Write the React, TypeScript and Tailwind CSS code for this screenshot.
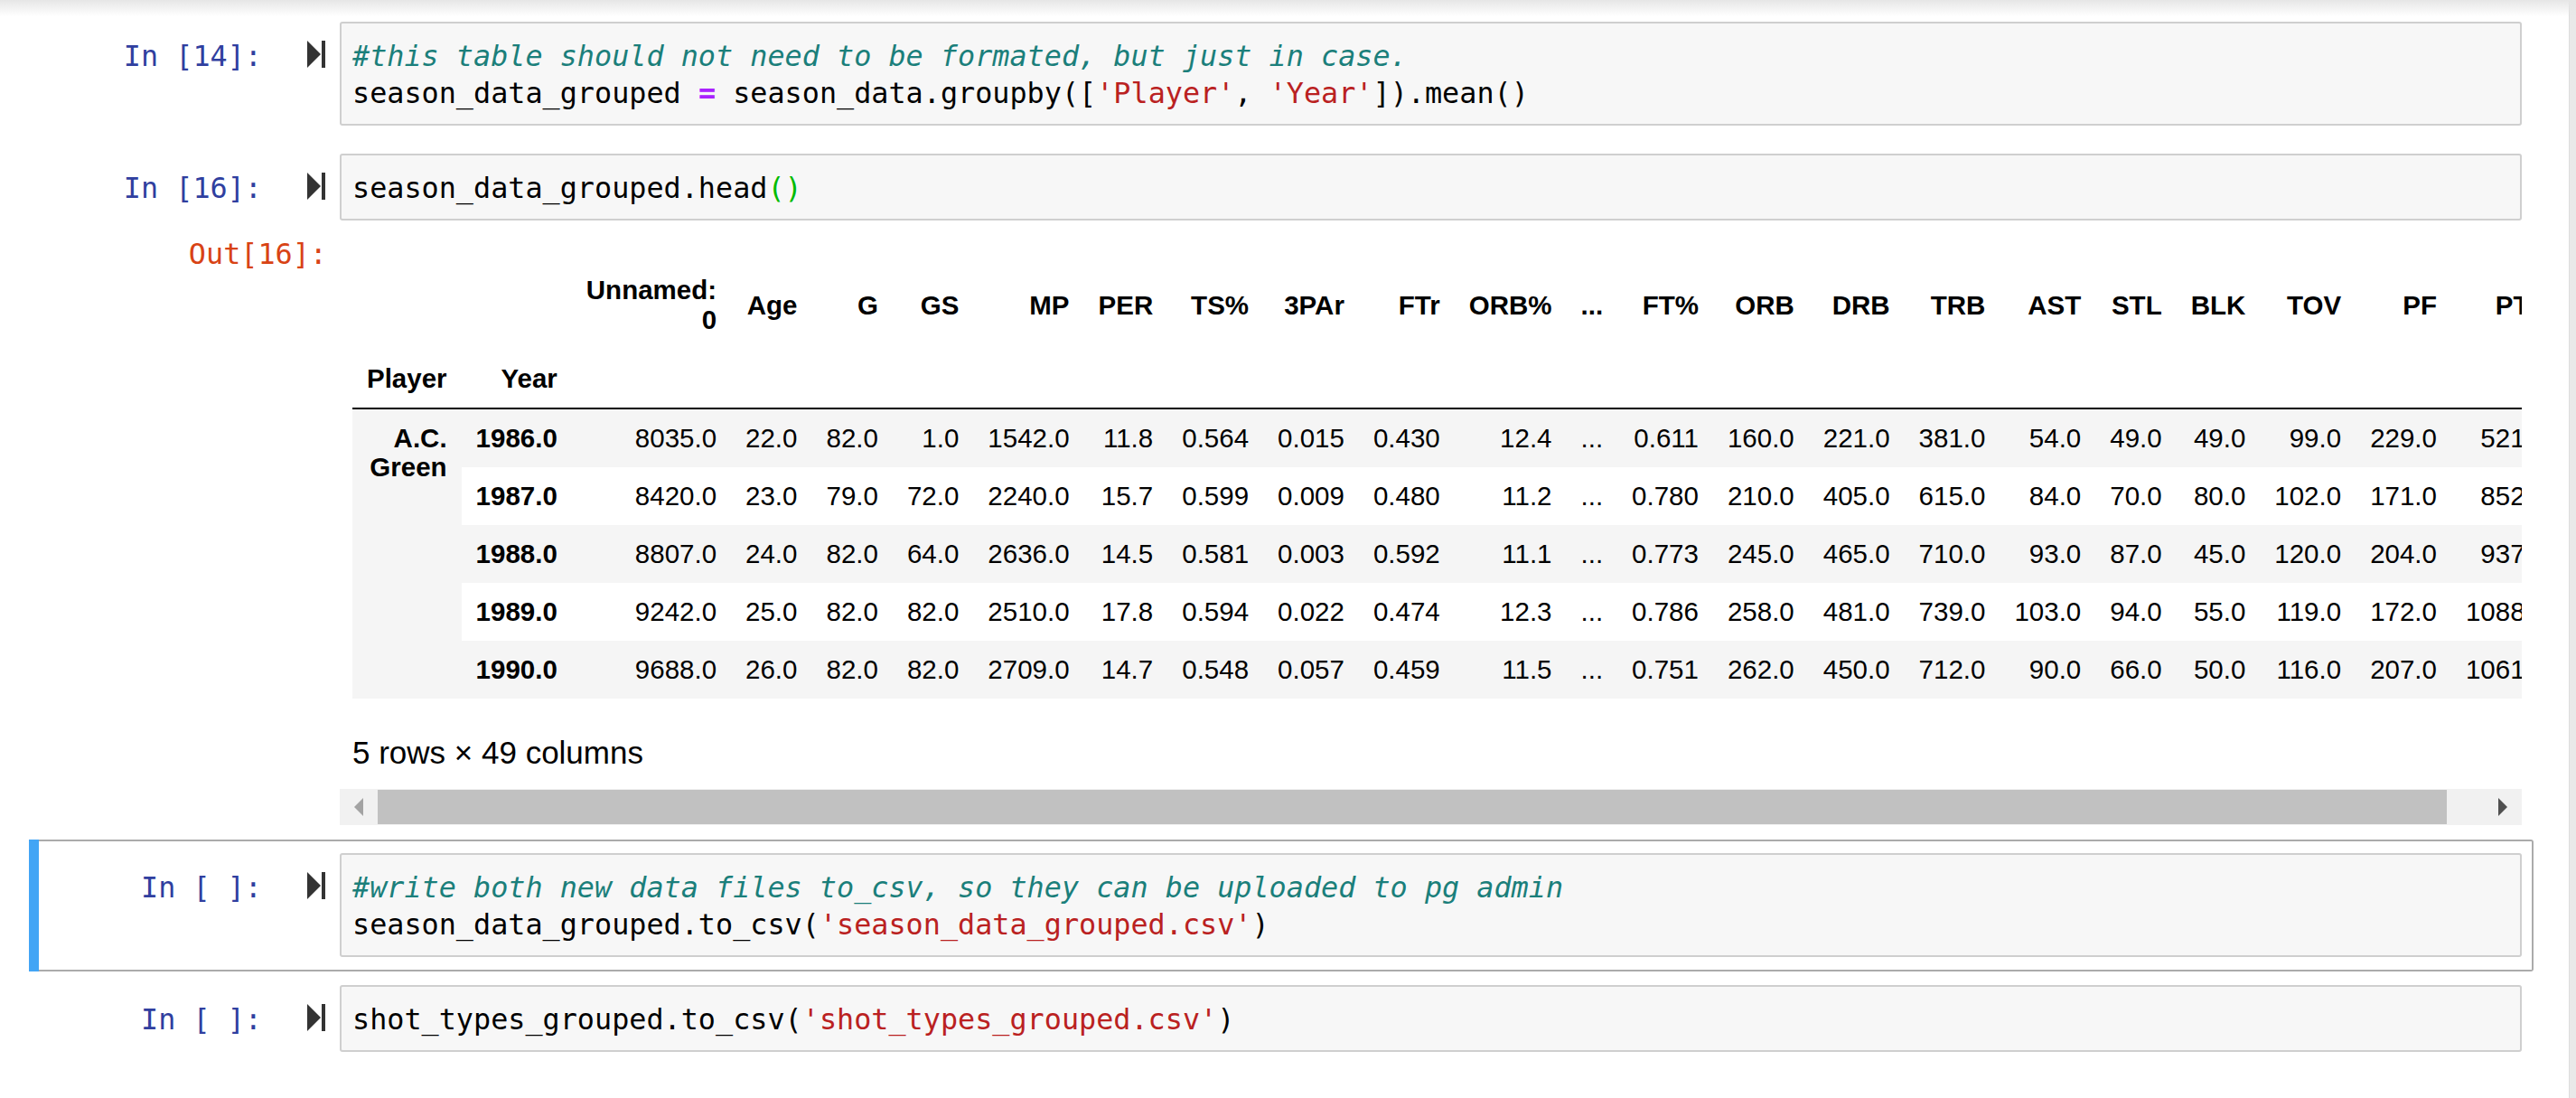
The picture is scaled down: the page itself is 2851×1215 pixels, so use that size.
import React from 'react';

const mono = "font-['DejaVu_Sans_Mono',monospace] text-[31.8px] leading-[41px]";
const sans = "font-['Liberation_Sans',Arial,sans-serif]";

const columns = ['Age', 'G', 'GS', 'MP', 'PER', 'TS%', '3PAr', 'FTr', 'ORB%', '...', 'FT%', 'ORB', 'DRB', 'TRB', 'AST', 'STL', 'BLK', 'TOV', 'PF', 'PTS'];

const rows = [
    { year: '1986.0', values: ['8035.0', '22.0', '82.0', '1.0', '1542.0', '11.8', '0.564', '0.015', '0.430', '12.4', '...', '0.611', '160.0', '221.0', '381.0', '54.0', '49.0', '49.0', '99.0', '229.0', '521.0'] },
    { year: '1987.0', values: ['8420.0', '23.0', '79.0', '72.0', '2240.0', '15.7', '0.599', '0.009', '0.480', '11.2', '...', '0.780', '210.0', '405.0', '615.0', '84.0', '70.0', '80.0', '102.0', '171.0', '852.0'] },
    { year: '1988.0', values: ['8807.0', '24.0', '82.0', '64.0', '2636.0', '14.5', '0.581', '0.003', '0.592', '11.1', '...', '0.773', '245.0', '465.0', '710.0', '93.0', '87.0', '45.0', '120.0', '204.0', '937.0'] },
    { year: '1989.0', values: ['9242.0', '25.0', '82.0', '82.0', '2510.0', '17.8', '0.594', '0.022', '0.474', '12.3', '...', '0.786', '258.0', '481.0', '739.0', '103.0', '94.0', '55.0', '119.0', '172.0', '1088.0'] },
    { year: '1990.0', values: ['9688.0', '26.0', '82.0', '82.0', '2709.0', '14.7', '0.548', '0.057', '0.459', '11.5', '...', '0.751', '262.0', '450.0', '712.0', '90.0', '66.0', '50.0', '116.0', '207.0', '1061.0'] },
];

function RunIcon() {
    return (
        <svg width="20" height="30" viewBox="0 0 20 30" className="block">
            <polygon points="0,0 15,15 0,30" fill="#333333" />
            <rect x="16" y="0" width="4" height="30" fill="#333333" />
        </svg>
    );
}

function Cell({ selected, children }: { selected?: boolean; children: React.ReactNode }) {
    return (
        <div className="flex">
            <div className={selected ? 'w-[11px] shrink-0 bg-[#42a5f5]' : 'w-[11px] shrink-0'} />
            <div
                className={`flex-1 min-w-0 border-y-2 border-r-2 rounded-r-[3px] pt-[13px] pb-[14px] pr-[11px] ${
                    selected ? 'border-[#ababab]' : 'border-transparent'
                }`}
            >
                {children}
            </div>
        </div>
    );
}

function InputRow({ prompt, children }: { prompt: string; children: React.ReactNode }) {
    return (
        <div className="flex items-start">
            <div className={`w-[257px] shrink-0 pt-[17px] pr-[10px] text-right whitespace-pre text-[#303f9f] ${mono}`}>
                {prompt}
            </div>
            <div className="w-[76px] shrink-0 pl-[40px] pt-[21px]">
                <RunIcon />
            </div>
            <div
                className={`flex-1 min-w-0 border-2 border-[#cfcfcf] rounded-[3px] bg-[#f7f7f7] pl-[12px] pt-[15px] pb-[14px] whitespace-pre text-black ${mono}`}
            >
                {children}
            </div>
        </div>
    );
}

const Comment = ({ children }: { children: React.ReactNode }) => (
    <span className="italic text-[#1b7f7b]">{children}</span>
);
const Str = ({ children }: { children: React.ReactNode }) => <span className="text-[#ba2121]">{children}</span>;

function Scrollbar() {
    return (
        <div className="flex h-[40px] bg-[#f1f1f1]">
            <div className="w-[42px] shrink-0 flex items-center pl-[16px]">
                <svg width="10" height="20" viewBox="0 0 10 20">
                    <polygon points="10,0 0,10 10,20" fill="#a3a3a3" />
                </svg>
            </div>
            <div className="flex-1 py-[1px]">
                <div className="h-full bg-[#c1c1c1]" />
            </div>
            <div className="w-[42px] shrink-0" />
            <div className="w-[41px] shrink-0 flex items-center pl-[15px]">
                <svg width="10" height="20" viewBox="0 0 10 20">
                    <polygon points="0,0 10,10 0,20" fill="#505050" />
                </svg>
            </div>
        </div>
    );
}

function DataFrame() {
    const th = 'px-[16px] py-[16px] text-right font-bold whitespace-nowrap';
    const td = 'px-[16px] py-[16px] text-right font-normal whitespace-nowrap align-middle';

    return (
        <table className={`border-collapse text-black text-[29.5px] leading-[32px] ${sans}`}>
            <thead>
                <tr className="leading-[33px]">
                    <th className={th} />
                    <th className={th} />
                    <th className={th}>
                        Unnamed:
                        <br />0
                    </th>
                    {columns.map((c) => (
                        <th key={c} className={th}>
                            {c}
                        </th>
                    ))}
                </tr>
                <tr className="leading-[33px]">
                    <th className={`${th} border-b-2 border-black`}>Player</th>
                    <th className={`${th} border-b-2 border-black`}>Year</th>
                    <th className={`${th} border-b-2 border-black`} />
                    {columns.map((c) => (
                        <th key={c} className={`${th} border-b-2 border-black`} />
                    ))}
                </tr>
            </thead>
            <tbody>
                {rows.map((r, i) => (
                    <tr key={r.year} className={i % 2 === 0 ? 'bg-[#f5f5f5]' : 'bg-white'}>
                        {i === 0 && (
                            <th rowSpan={5} className={`${th} align-top bg-[#f5f5f5]`}>
                                A.C.
                                <br />
                                Green
                            </th>
                        )}
                        <th className={`${th} align-middle`}>{r.year}</th>
                        {r.values.map((v, j) => (
                            <td key={j} className={td}>
                                {v}
                            </td>
                        ))}
                    </tr>
                ))}
            </tbody>
        </table>
    );
}

export default function App() {
    return (
        <div className="relative flex w-[2851px] min-h-[1215px] bg-white">
            <div className="pointer-events-none absolute top-0 left-0 right-0 h-[18px] bg-linear-to-b from-[#e6e6e6] to-transparent" />

            <div className="flex-1 min-w-0 pl-[32px] pr-[39px] pt-[9px]">
                <Cell>
                    <InputRow prompt="In [14]:">
                        <div>
                            <Comment>#this table should not need to be formated, but just in case.</Comment>
                        </div>
                        <div>
                            season_data_grouped <span className="font-bold text-[#aa22ff]">=</span>{' '}
                            season_data.groupby([<Str>'Player'</Str>, <Str>'Year'</Str>]).mean()
                        </div>
                    </InputRow>
                </Cell>

                <Cell>
                    <InputRow prompt="In [16]:">
                        <div>
                            season_data_grouped.head<span className="text-[#00bb00]">()</span>
                        </div>
                    </InputRow>

                    <div className="flex items-start mt-[16px]">
                        <div className={`w-[333px] shrink-0 pr-[14px] text-right text-[#d84315] ${mono}`}>
                            Out[16]:
                        </div>
                        <div className="flex-1 min-w-0 flex flex-col">
                            <div className="overflow-hidden pl-[14px] pt-[28px]">
                                <DataFrame />
                                <p className={`mt-[40px] mb-[20px] text-[35px] leading-[40px] text-black whitespace-nowrap ${sans}`}>
                                    5 rows × 49 columns
                                </p>
                            </div>
                            <Scrollbar />
                        </div>
                    </div>
                </Cell>

                <Cell selected>
                    <InputRow prompt="In [ ]:">
                        <div>
                            <Comment>#write both new data files to_csv, so they can be uploaded to pg admin</Comment>
                        </div>
                        <div>
                            season_data_grouped.to_csv(<Str>'season_data_grouped.csv'</Str>)
                        </div>
                    </InputRow>
                </Cell>

                <Cell>
                    <InputRow prompt="In [ ]:">
                        <div>
                            shot_types_grouped.to_csv(<Str>'shot_types_grouped.csv'</Str>)
                        </div>
                    </InputRow>
                </Cell>
            </div>

            <div className="w-[8px] shrink-0 bg-[#e9e9e9] border-l border-[#dddddd]" />
        </div>
    );
}
